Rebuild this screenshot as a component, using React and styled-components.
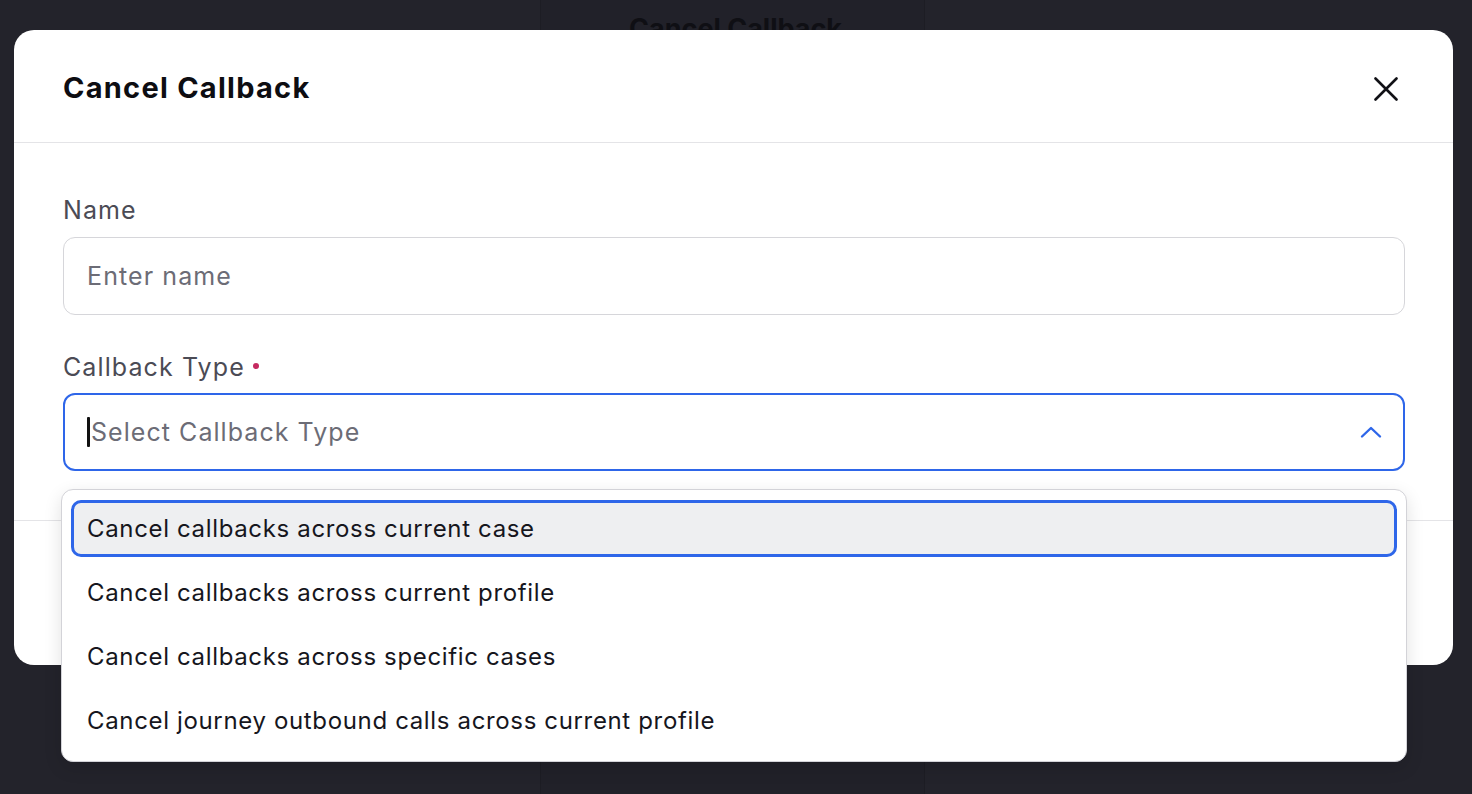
import React from "react";
import styled, { createGlobalStyle } from "styled-components";

const GlobalStyle = createGlobalStyle`
  html, body {
    margin: 0;
    padding: 0;
    background: #23232b;
    font-family: 'Inter', 'Noto Sans', sans-serif;
  }
  * { box-sizing: border-box; }
`

const Page = styled.div`
  position: relative;
  width: 1472px;
  height: 794px;
  overflow: hidden;
  background: #23232b;
  display: flex;
  justify-content: center;
`
const BackdropColumn = styled.div`
  width: 385px;
  height: 100%;
  margin-left: -7px;
  background: #212129;
  border-left: 1px solid #1d1d24;
  border-right: 1px solid #1d1d24;
  display: flex;
  justify-content: center;
`
const BackdropTitle = styled.div`
  margin-top: 12px;
  margin-left: 6px;
  font-size: 27px;
  font-weight: 700;
  color: #0f0f14;
`

const Modal = styled.div`
  position: absolute;
  top: 30px;
  left: 14px;
  width: 1439px;
  height: 635px;
  background: #ffffff;
  border-radius: 20px;
  display: flex;
  flex-direction: column;
`
const Header = styled.div`
  height: 113px;
  flex-shrink: 0;
  display: flex;
  align-items: center;
  justify-content: space-between;
  padding: 2px 55px 0 49px;
  border-bottom: 1.5px solid #e4e4e7;
`
const Title = styled.h2`
  margin: 0;
  font-size: 29px;
  font-weight: 700;
  color: #0d0d12;
  letter-spacing: 1.25px;
`
const CloseButton = styled.button`
  width: 24px;
  height: 24px;
  padding: 0;
  border: none;
  background: none;
  display: flex;
  margin-top: 4px;
  cursor: pointer;
`
const Body = styled.div`
  display: flex;
  flex-direction: column;
  padding: 51px 48px 49px 49px;
  border-bottom: 1.5px solid #e4e4e7;
`
const Field = styled.div`
  display: flex;
  flex-direction: column;
  gap: ${({gap}) => gap || 11}px;
  margin-top: ${({top}) => top || 0}px;
  position: relative;
`
const Label = styled.label`
  display: flex;
  align-items: center;
  gap: 8px;
  height: 32px;
  font-size: 25px;
  letter-spacing: 1.1px;
  color: #4b4b55;
`
const Required = styled.span`
  width: 6px;
  height: 6px;
  border-radius: 50%;
  background: #c52a60;
  margin-top: -2px;
`
const TextInput = styled.input`
  height: 78px;
  width: 100%;
  border: 1.5px solid #d6d6da;
  border-radius: 12px;
  padding: 0 23px;
  font-family: inherit;
  font-size: 25px;
  letter-spacing: 1.1px;
  color: #1a1a22;
  outline: none;
  &::placeholder {
    color: #6c6c76;
  }
`
const SelectBox = styled.div`
  height: 78px;
  border: 2px solid #2e66e9;
  border-radius: 12px;
  display: flex;
  align-items: center;
  justify-content: space-between;
  padding: 0 21px 0 22px;
`
const SelectValue = styled.div`
  display: flex;
  align-items: center;
  font-size: 25px;
  letter-spacing: 1.05px;
  color: #6c6c76;
`
const Caret = styled.span`
  width: 3px;
  height: 30px;
  background: #111;
  border-radius: 1px;
  margin-right: 1px;
`
const Footer = styled.div`
  flex: 1;
`
const Menu = styled.ul`
  position: absolute;
  top: 138px;
  left: -2px;
  right: -2px;
  margin: 0;
  padding: 10px 9px 12px;
  list-style: none;
  background: #ffffff;
  border: 1.5px solid #d3d3d8;
  border-radius: 12px;
  box-shadow: 0 6px 18px rgba(0, 0, 0, 0.12);
  display: flex;
  flex-direction: column;
  gap: 7px;
`
const Option = styled.li`
  height: 57px;
  display: flex;
  align-items: center;
  padding: 0 13px;
  border: 3px solid ${({active}) => active ? '#2e66e9' : 'transparent'};
  border-radius: 10px;
  background: ${({active}) => active ? '#eeeff1' : 'transparent'};
  font-size: 24px;
  letter-spacing: 0.65px;
  color: #16161d;
`

const options = [
  "Cancel callbacks across current case",
  "Cancel callbacks across current profile",
  "Cancel callbacks across specific cases",
  "Cancel journey outbound calls across current profile",
]

const App = () => {
  return (
    <>
      <GlobalStyle />
      <Page>
        <BackdropColumn>
          <BackdropTitle>Cancel Callback</BackdropTitle>
        </BackdropColumn>
        <Modal>
          <Header>
            <Title>Cancel Callback</Title>
            <CloseButton aria-label="Close">
              <svg width="24" height="24" viewBox="0 0 24 24" fill="none">
                <path d="M1.5 1.5L22.5 22.5M22.5 1.5L1.5 22.5" stroke="#111116" strokeWidth="2.6" strokeLinecap="round"/>
              </svg>
            </CloseButton>
          </Header>
          <Body>
            <Field>
              <Label>Name</Label>
              <TextInput placeholder="Enter name" />
            </Field>
            <Field top={36} gap={10}>
              <Label>Callback Type<Required /></Label>
              <SelectBox>
                <SelectValue><Caret />Select Callback Type</SelectValue>
                <svg width="22" height="14" viewBox="0 0 22 14" fill="none">
                  <path d="M2 11.5L11 3L20 11.5" stroke="#2e66e9" strokeWidth="2.4" strokeLinecap="round" strokeLinejoin="round"/>
                </svg>
              </SelectBox>
              <Menu>
                {options.map((opt, i) => (
                  <Option key={opt} active={i === 0}>{opt}</Option>
                ))}
              </Menu>
            </Field>
          </Body>
          <Footer />
        </Modal>
      </Page>
    </>
  )
}

export default App
